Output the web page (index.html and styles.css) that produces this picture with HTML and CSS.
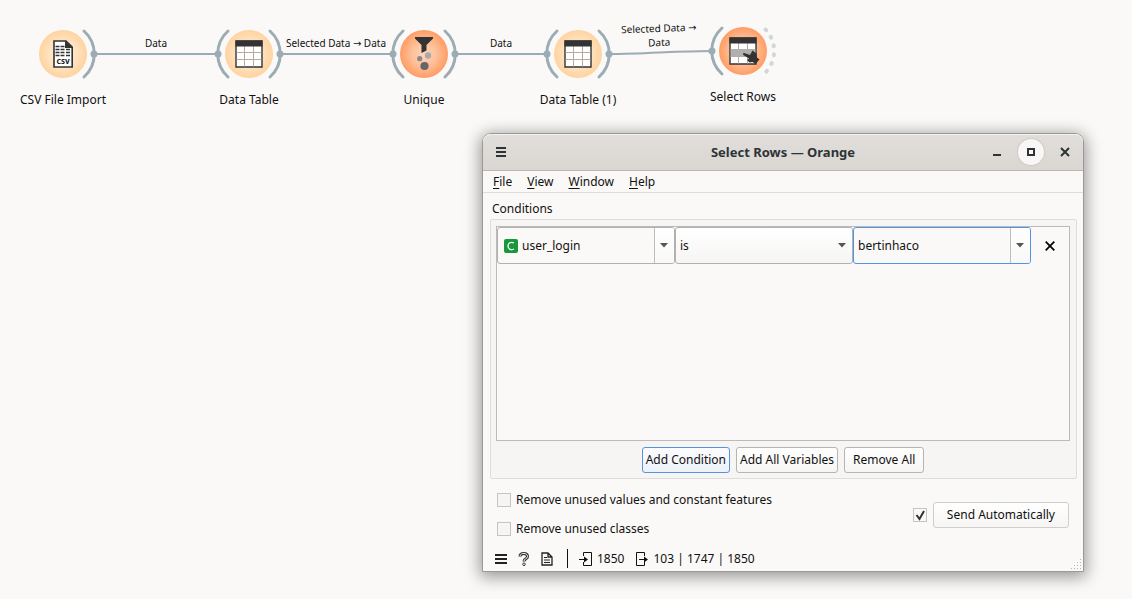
FILE: index.html
```html
<!DOCTYPE html>
<html lang="en">
<head>
<meta charset="utf-8">
<title>Select Rows — Orange</title>
<link rel="stylesheet" href="styles.css">
</head>
<body>
<svg class="defs" width="0" height="0" aria-hidden="true">
  <defs>
    <radialGradient id="peach"><stop offset="0" stop-color="#ffefdc"/><stop offset=".55" stop-color="#ffe3c2"/><stop offset="1" stop-color="#ffd39f"/></radialGradient>
    <radialGradient id="coral"><stop offset="0" stop-color="#ffd6bd"/><stop offset=".5" stop-color="#ffc09a"/><stop offset="1" stop-color="#ff9d64"/></radialGradient>
    <g id="arc-out"><path class="arc" d="M21-23A31 31 0 0 1 21 23"/><circle class="dot" cx="31" r="3.5"/></g>
    <g id="arc-in"><path class="arc" d="M-21-23A31 31 0 0 0-21 23"/><circle class="dot" cx="-31" r="3.5"/></g>
    <g id="table">
      <path fill="#fff" stroke="#333" stroke-width="1.4" d="M-13-13H13V13H-13Z"/>
      <path stroke="#b5aba0" d="M-4.5-8V12.5M4.5-8V12.5M-12.5-1.5h25M-12.5 5.500h25"/>
      <path fill="#333" d="M-13.500-13.500h27v6h-27z"/>
    </g>
  </defs>
</svg>

<main class="canvas">
  <svg class="links" width="800" height="120" aria-hidden="true">
    <path d="M94 54H218M280 54H393M455 54H547M609 54C645 54 675 51 712 51"/>
  </svg>
  <span class="link-label label-a">Data</span>
  <span class="link-label label-b">Selected Data <span class="to">→</span> Data</span>
  <span class="link-label label-c">Data</span>
  <span class="link-label label-d">Selected Data <span class="to">→</span> Data</span>

  <figure class="node node-csv">
    <svg viewBox="-40 -28 80 56">
      <circle r="24" fill="url(#peach)"/><use href="#arc-out"/>
      <path fill="#fff" stroke="#333" stroke-width="1.600" d="M-9-13H3L9.200-7V13H-9Z"/>
      <path fill="#333" d="M2-13.500 10-6H2z"/>
      <path stroke="#333" stroke-width="1.300" d="M-7.500-7.500h4M-2.500-7.500h4M-7.500-4.500h4M-2.500-4.500h4M3-4.500h4M-7.500-1.500h4M-2.500-1.500h4M3-1.500h4M-7.500 1.500h4M-2.500 1.500h4M3 1.500h4"/>
      <text class="csv" x="0" y="10">CSV</text>
    </svg>
    <figcaption>CSV File Import</figcaption>
  </figure>
  <figure class="node node-table">
    <svg viewBox="-40 -28 80 56"><circle r="24" fill="url(#peach)"/><use href="#arc-in"/><use href="#arc-out"/><use href="#table"/></svg>
    <figcaption>Data Table</figcaption>
  </figure>
  <figure class="node node-unique">
    <svg viewBox="-40 -28 80 56">
      <circle r="24" fill="url(#coral)"/><use href="#arc-in"/><use href="#arc-out"/>
      <path fill="#333" d="M-9-17H9V-15.500L2.500-9V-3.500L-2.500-1V-9L-9-15.500Z"/>
      <circle cx="4" cy="1.500" r="3.200" fill="#aaa"/><circle cx="-4.300" cy="4.700" r="2.600" fill="#888"/><circle cx=".5" cy="12" r="4.100" fill="#666"/>
    </svg>
    <figcaption>Unique</figcaption>
  </figure>
  <figure class="node node-table-1">
    <svg viewBox="-40 -28 80 56"><circle r="24" fill="url(#peach)"/><use href="#arc-in"/><use href="#arc-out"/><use href="#table"/></svg>
    <figcaption>Data Table (1)</figcaption>
  </figure>
  <figure class="node node-select">
    <svg viewBox="-40 -28 80 56">
      <circle r="24" fill="url(#coral)"/><use href="#arc-in"/>
      <path class="arc unlinked" d="M22.500-21.500A31 31 0 0 1 22.500 21.500"/>
      <use href="#table"/><path fill="#b0b0b0" d="M-12.300-1.500h24.600v7h-24.600z"/>
      <path fill="#333" d="M.5 1.800 7 4 9.500-.5 13.500 2.500 14 6.500 16.500 8.500 12.500 13 9.500 11 6.500 11.500 4 9 6 7.500 0 3.800Z"/>
    </svg>
    <figcaption>Select Rows</figcaption>
  </figure>

  <section class="window" aria-label="Select Rows — Orange">
    <header class="titlebar">
      <button class="title-btn" aria-label="Window menu"><svg width="10" height="10"><path fill="#2e3436" d="M0 0h10v2H0zM0 4h10v2H0zM0 8h10v2H0z"/></svg></button>
      <h1>Select Rows — Orange</h1>
      <div class="title-actions">
        <button class="title-btn" aria-label="Minimize"><svg width="10" height="10"><path fill="#2e3436" d="M1 7h8v2H1z"/></svg></button>
        <button class="title-btn round" aria-label="Maximize"><svg width="8" height="8"><path fill="none" stroke="#2e3436" stroke-width="2" d="M1 1h6v6H1z"/></svg></button>
        <button class="title-btn" aria-label="Close"><svg width="10" height="10"><path stroke="#2e3436" stroke-width="2" d="M1 1l8 8M9 1l-8 8"/></svg></button>
      </div>
    </header>
    <nav class="menubar">
      <button><u>F</u>ile</button><button><u>V</u>iew</button><button><u>W</u>indow</button><button><u>H</u>elp</button>
    </nav>
    <div class="content">
      <h2>Conditions</h2>
      <div class="group">
        <div class="list">
          <div class="condition">
            <div class="combo editable">
              <svg class="var-icon" width="14" height="14" aria-hidden="true"><rect width="14" height="14" rx="2" fill="#17993b"/><path fill="none" stroke="#fff" stroke-width="1.300" d="M10 4C7 2.300 4 4 4 7s3 4.700 6 3"/></svg>
              <input type="text" value="user_login" aria-label="Variable">
              <button class="arrow" aria-label="Show variables"><svg width="8" height="5"><path fill="#555" d="M0 0h8L4 4.500z"/></svg></button>
            </div>
            <div class="combo plain">
              <select aria-label="Operator"><option>is</option></select>
              <svg class="select-arrow" width="8" height="5" aria-hidden="true"><path fill="#555" d="M0 0h8L4 4.500z"/></svg>
            </div>
            <div class="combo editable focused">
              <input type="text" value="bertinhaco" aria-label="Value">
              <button class="arrow" aria-label="Show values"><svg width="8" height="5"><path fill="#555" d="M0 0h8L4 4.500z"/></svg></button>
            </div>
            <button class="remove" aria-label="Remove condition"><svg width="10" height="10"><path stroke="#000" stroke-width="1.700" d="M.7.7l8.600 8.600M9.300.7L.7 9.300"/></svg></button>
          </div>
        </div>
        <div class="actions">
          <button class="btn primary">Add Condition</button><button class="btn">Add All Variables</button><button class="btn wide">Remove All</button>
        </div>
      </div>
      <div class="options">
        <div class="checks">
          <label><input type="checkbox">Remove unused values and constant features</label>
          <label><input type="checkbox">Remove unused classes</label>
        </div>
        <div class="send">
          <input type="checkbox" checked aria-label="Send automatically">
          <button class="btn soft">Send Automatically</button>
        </div>
      </div>
    </div>
    <footer class="statusbar">
      <button aria-label="Menu"><svg width="12" height="12"><path fill="#222" d="M0 1h12v2H0zM0 5h12v2H0zM0 9h12v2H0z"/></svg></button>
      <button aria-label="Help"><svg width="12" height="14"><path fill="none" stroke="#333" stroke-width="3" d="M2 4.500C2 .5 9.500.5 9.500 4.500c0 2.500-3.500 2-3.500 5"/><path fill="none" stroke="#fafafa" stroke-width="1" d="M2 4C2.500.5 9.500.5 9.500 4.500c0 2.500-3.500 2-3.500 4.500"/><circle cx="6" cy="12.300" r="1.300" fill="#fff" stroke="#333"/></svg></button>
      <button aria-label="Report"><svg width="12" height="14"><path fill="none" stroke="#222" stroke-width="1.300" d="M1 1h6l4 4v8H1zM7 1v4h4"/><path stroke="#222" d="M3 5.500h3M3 8h6M3 10.500h6"/></svg></button>
      <span class="divider"></span>
      <span class="stat"><svg width="14" height="14"><path fill="none" stroke="#111" d="M4.500 4V.5h8v13h-8V10M0 7.500h7"/><path fill="#111" d="M5 4.500l4 3-4 3z"/></svg>1850</span>
      <span class="stat"><svg width="14" height="14"><path fill="none" stroke="#111" d="M9.500 4V.5h-8v13h8V10M4 7.500h7"/><path fill="#111" d="M9 4.500l4 3-4 3z"/></svg>103 | 1747 | 1850</span>
      <svg class="grip" width="10" height="10" aria-hidden="true"><path fill="#b5b5b2" d="M9 0h1v1H9zM6 3h1v1H6zM9 3h1v1H9zM3 6h1v1H3zM6 6h1v1H6zM9 6h1v1H9zM0 9h1v1H0zM3 9h1v1H3zM6 9h1v1H6zM9 9h1v1H9z"/></svg>
    </footer>
  </section>
</main>
</body>
</html>
```
FILE: styles.css
```css
* { box-sizing: border-box; }
body {
  margin: 0;
  background: #faf9f8;
  color: #111;
  font: 12px/16px "Noto Sans", "Open Sans", sans-serif;
}
button, input, select { font: inherit; color: inherit; margin: 0; }
button { border: 0; padding: 0; background: none; }
svg { display: block; flex: none; }
.defs { position: absolute; }

/* Workflow canvas */
.canvas { position: relative; min-height: 599px; overflow: hidden; }
.links { position: absolute; left: 0; top: 0; }
.links path { fill: none; stroke: #9cacb4; stroke-width: 2; }
.arc { fill: none; stroke: #9cacb4; stroke-width: 3; stroke-linecap: round; }
.dot { fill: #9cacb4; }
.unlinked { stroke: #d0d7db; stroke-width: 4; stroke-dasharray: 1 8; }
.node {
  position: absolute;
  margin: 0;
  width: 120px;
  display: flex;
  flex-direction: column;
  align-items: center;
  gap: 10px;
}
.node svg { width: 80px; height: 56px; overflow: visible; }
.node-csv { left: 3px; top: 26px; }
.node-table { left: 189px; top: 26px; }
.node-unique { left: 364px; top: 26px; }
.node-table-1 { left: 518px; top: 26px; }
.node-select { left: 683px; top: 23px; }
.csv { font-size: 7px; font-weight: 800; text-anchor: middle; fill: #222; }
.link-label {
  position: absolute;
  width: 110px;
  text-align: center;
  font-size: 10px;
  line-height: 14px;
}
.to { font-family: "DejaVu Sans", sans-serif; line-height: 1; }
.label-a { left: 101px; top: 36px; }
.label-b { left: 281px; top: 36px; }
.label-c { left: 446px; top: 36px; }
.label-d { left: 619px; top: 21px; width: 80px; transform: rotate(-2deg); }

/* Window */
.window {
  position: absolute;
  left: 482px;
  right: 48px;
  top: 133px;
  min-width: 560px;
  border: 1px solid #999a96;
  border-radius: 9px 9px 0 0;
  background: #faf9f8;
  box-shadow: 0 3px 16px 2px rgba(0, 0, 0, .4);
}
.titlebar {
  display: grid;
  grid-template-columns: 1fr auto 1fr;
  align-items: center;
  height: 37px;
  padding: 0 5px;
  border-bottom: 1px solid #bfb8b1;
  border-radius: 8px 8px 0 0;
  background: linear-gradient(#e1dedb, #dad6d2);
  box-shadow: inset 0 1px #f3f2f0;
}
.titlebar h1 { margin: 0; font-size: 13px; font-weight: 700; color: #2e3436; }
.title-btn { width: 26px; height: 26px; display: grid; place-items: center; }
.title-actions { display: flex; gap: 8px; justify-content: flex-end; }
.round { border-radius: 50%; background: #f8f7f6; box-shadow: 0 0 1px 1px #cfcbc6; }
.menubar {
  display: flex;
  gap: 15px;
  padding: 3px 10px 2px;
  border-bottom: 1px solid #dedddb;
}
.menubar u { text-underline-offset: 2px; }
.content { padding: 8px 6px 0 7px; }
.content h2 { margin: 0 2px 2px; font-size: 12px; font-weight: 400; }
.group {
  padding: 6px 6px 5px 5px;
  border: 1px solid #dedddb;
  border-radius: 2px;
  background: #f6f5f4;
}
.list { min-height: 215px; border: 1px solid #bcbbb9; background: #faf9f8; }
.condition { display: grid; grid-template-columns: 1fr 1fr 1fr 38px; }
.combo {
  position: relative;
  display: flex;
  align-items: center;
  min-width: 0;
  height: 37px;
  border: 1px solid #b2b1af;
  border-radius: 3px;
}
.combo input {
  flex: 1;
  min-width: 0;
  border: 0;
  outline: 0;
  padding: 0 4px;
  background: transparent;
}
.var-icon { margin-left: 6px; }
.arrow {
  align-self: stretch;
  width: 20px;
  display: grid;
  place-items: center;
  padding-right: 2px;
  border-left: 1px solid #bfbebc;
  border-radius: 0 2px 2px 0;
  background: linear-gradient(#fff, #f8f8f7);
}
.focused { border-color: #5294e2; }
.plain { background: linear-gradient(#fff, #f6f5f4); }
.plain select {
  appearance: none;
  width: 100%;
  height: 100%;
  border: 0;
  padding: 0 24px 0 4px;
  background: transparent;
}
.select-arrow { position: absolute; right: 6px; pointer-events: none; }
.remove { display: grid; place-items: center; }
.actions { display: flex; justify-content: center; gap: 6px; margin-top: 6px; }
.btn {
  height: 26px;
  padding: 0 3px;
  border: 1px solid #b6b5b3;
  border-radius: 3px;
  background: linear-gradient(#fff, #f6f5f4);
}
.wide { padding: 0 8px; }
.primary { border-color: #5294e2; background: linear-gradient(#fbfcfe, #edf1f8); }
.soft { padding: 0 13px; border-color: #cfcecc; }
.options {
  display: flex;
  justify-content: space-between;
  align-items: center;
  padding: 13px 8px 9px 7px;
}
.checks { display: flex; flex-direction: column; gap: 13px; }
.checks label { display: flex; align-items: center; gap: 5px; }
input[type="checkbox"] {
  appearance: none;
  flex: none;
  width: 14px;
  height: 14px;
  border: 1px solid #c6c5c3;
  background: #f6f5f4;
}
input[type="checkbox"]:checked {
  background: url("data:image/svg+xml,%3Csvg xmlns='http://www.w3.org/2000/svg' width='12' height='12'%3E%3Cpath d='M2.500 6l3 4L10 2' fill='none' stroke='%232e3436' stroke-width='2'/%3E%3C/svg%3E") center no-repeat;
}
.send { display: flex; align-items: center; gap: 6px; }
.statusbar {
  display: flex;
  align-items: center;
  height: 25px;
  padding: 0 12px;
  position: relative;
}
.statusbar button { margin-right: 11px; }
.divider { width: 1px; height: 19px; margin: 0 11px 0 3px; background: #111; }
.stat { display: flex; align-items: center; gap: 4px; margin-right: 11px; }
.grip { position: absolute; right: 2px; bottom: 2px; }
```
